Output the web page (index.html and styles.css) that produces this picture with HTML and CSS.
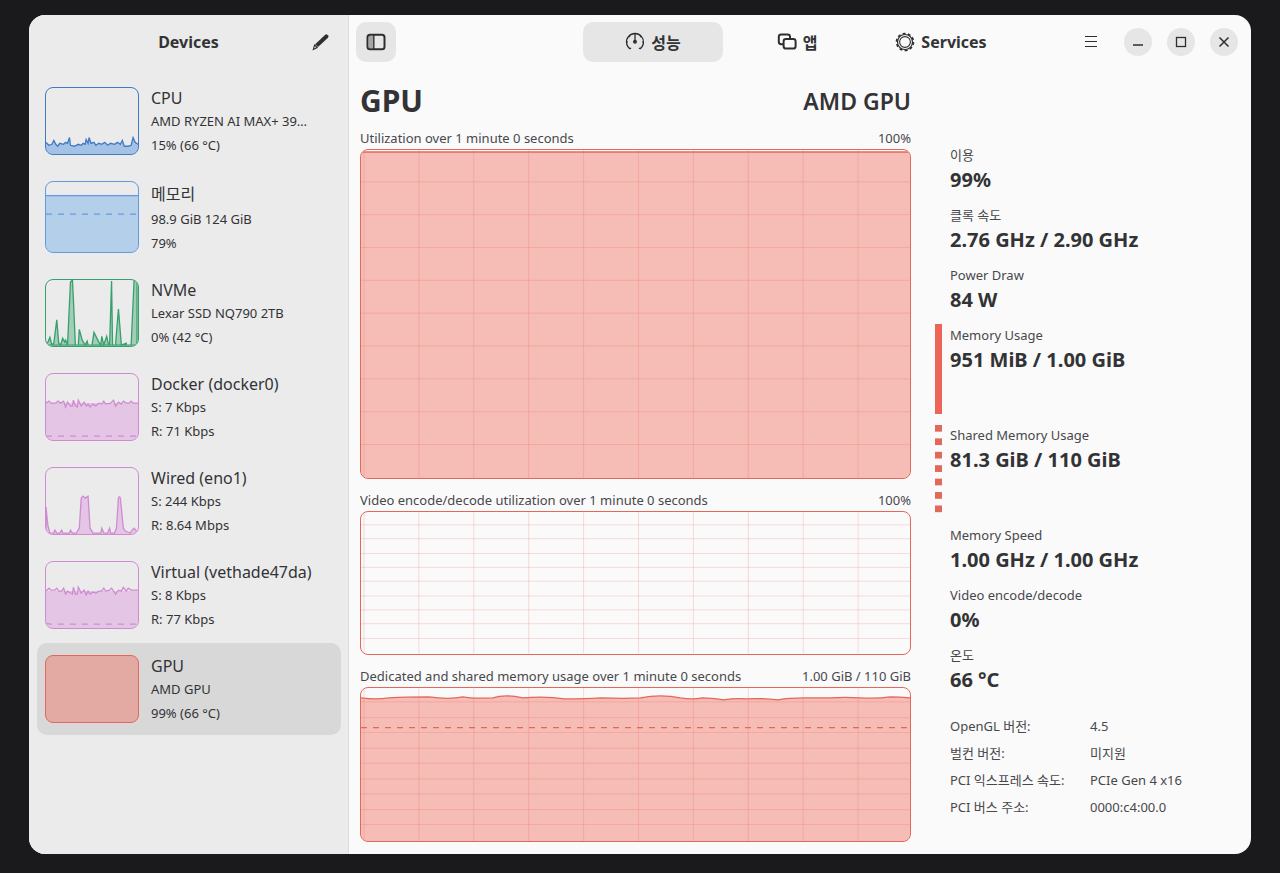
FILE: index.html
```html
<!DOCTYPE html>
<html lang="ko">
<head>
    <meta charset="UTF-8">
    <meta name="viewport" content="width=device-width, initial-scale=1.0">
    <title>GPU</title>
    <link rel="stylesheet" href="styles.css">
</head>
<body>
    <div class="window">

        <!-- Device list -->
        <aside class="sidebar">
            <header class="sidebar-header">
                <h2>Devices</h2>
                <button class="icon-button" aria-label="Edit">
                    <svg width="18" height="18" viewBox="0 0 18 18"><path d="M13.2 1.8 Q14.4.8 15.6 1.9 L16.2 2.6 Q17 3.7 16 4.7 L6 14 L3.2 11.2Z" fill="#2e2e30"/><path d="M2.6 12 L5.2 14.6 L1.3 16.4Z" fill="none" stroke="#2e2e30" stroke-width="1.1"/></svg>
                </button>
            </header>
            <nav class="device-list">
                <button class="device">
                    <span class="thumb cpu"><svg viewBox="0 0 94 68" preserveAspectRatio="none">
                        <path class="area" d="M0 56 L3 59 L6 58 L8 54 L10 58 L12 60 L14 57 L18 58 L20 56 L22 57 L24 51 L25 59 L29 60 L33 58 L36 59 L38 57 L40 58 L41 53 L43 57 L44 51 L46 57 L49 56 L51 59 L54 57 L57 58 L60 56 L63 59 L66 57 L70 58 L73 56 L76 58 L78 54 L80 60 L84 60 L87 59 L89 51 L91 56 L94 58 V70 H0Z"/>
                        <path class="line" d="M0 56 L3 59 L6 58 L8 54 L10 58 L12 60 L14 57 L18 58 L20 56 L22 57 L24 51 L25 59 L29 60 L33 58 L36 59 L38 57 L40 58 L41 53 L43 57 L44 51 L46 57 L49 56 L51 59 L54 57 L57 58 L60 56 L63 59 L66 57 L70 58 L73 56 L76 58 L78 54 L80 60 L84 60 L87 59 L89 51 L91 56 L94 58"/>
                    </svg></span>
                    <span class="device-text"><strong>CPU</strong><span>AMD RYZEN AI MAX+ 39…</span><span>15% (66 °C)</span></span>
                </button>
                <button class="device tall">
                    <span class="thumb memory"><svg viewBox="0 0 94 72" preserveAspectRatio="none">
                        <path class="area" d="M0 14 H94 V74 H0Z"/>
                        <path class="line" d="M0 14 H94"/>
                        <path class="line dash" d="M0 33 H94"/>
                    </svg></span>
                    <span class="device-text"><strong>메모리</strong><span>98.9 GiB 124 GiB</span><span>79%</span></span>
                </button>
                <button class="device">
                    <span class="thumb disk"><svg viewBox="0 0 94 68" preserveAspectRatio="none">
                        <path class="area line" d="M0 67 L2 64 L4 59 L6 67 L8 65 L11 41 L13 65 L15 67 L17 60 L19 64 L20 62 L22 67 L25 2 L27 0 L28 20 L30 67 H33 L34 51 L37 62 L40 67 L42 63 L43 67 H47 L49 54 L54 64 L56 67 L57 58 L59 67 L62 58 L64 67 H65 L67 1 L68 67 H71 L74 30 L77 67 L82 65 V67 H87 L90 0 H93 V67Z"/>
                    </svg></span>
                    <span class="device-text"><strong>NVMe</strong><span>Lexar SSD NQ790 2TB</span><span>0% (42 °C)</span></span>
                </button>
                <button class="device">
                    <span class="thumb net"><svg viewBox="0 0 94 68" preserveAspectRatio="none">
                        <path class="area" d="M0 30 H94 V70 H0Z"/>
                        <path class="line" d="M0 30 L3 28 L5 30 H10 L12 28 L15 30 L18 28 L20 34 L22 29 L25 33 L27 33 L28 27 L30 33 L32 34 L33 27 L36 33 L39 29 L41 33 L43 31 L45 34 L48 31 L51 33 L54 30 L57 31 L59 28 L61 31 L66 30 L69 27 L71 33 L74 29 L77 31 L79 28 L82 30 H85 L87 28 L89 30 H94"/>
                        <path class="line dash" d="M0 64 H94"/>
                    </svg></span>
                    <span class="device-text"><strong>Docker (docker0)</strong><span>S: 7 Kbps</span><span>R: 71 Kbps</span></span>
                </button>
                <button class="device">
                    <span class="thumb net"><svg viewBox="0 0 94 68" preserveAspectRatio="none">
                        <path class="area line" d="M0 40 L2 60 L4 67 H8 L9 64 L11 67 H14 L16 64 L17 67 H24 L25 64 L27 67 H31 L34 62 L36 31 L38 29 L40 31 L43 29 L45 62 L48 67 H56 L57 62 L59 67 H63 L65 62 L66 67 H70 L72 62 L74 31 Q75 28 76 31 L79 62 L81 65 L86 67 L88 64 L90 62 L94 67 V70 H0Z"/>
                    </svg></span>
                    <span class="device-text"><strong>Wired (eno1)</strong><span>S: 244 Kbps</span><span>R: 8.64 Mbps</span></span>
                </button>
                <button class="device">
                    <span class="thumb net"><svg viewBox="0 0 94 68" preserveAspectRatio="none">
                        <path class="area" d="M0 30 H94 V70 H0Z"/>
                        <path class="line" d="M0 30 L3 27 L5 29 H9 L11 27 L13 30 H16 L18 27 L20 33 L22 30 L25 32 L27 33 L28 26 L30 33 L32 33 L33 26 L36 32 L39 29 L41 34 L43 30 L45 33 L48 31 L51 32 L54 30 L57 30 L59 27 L61 30 L65 29 L67 27 L71 33 L74 29 L77 30 L79 26 L82 30 L84 27 L87 29 H94"/>
                        <path class="line dash" d="M0 63 L4 64 H94"/>
                    </svg></span>
                    <span class="device-text"><strong>Virtual (vethade47da)</strong><span>S: 8 Kbps</span><span>R: 77 Kbps</span></span>
                </button>
                <button class="device selected">
                    <span class="thumb gpu"></span>
                    <span class="device-text"><strong>GPU</strong><span>AMD GPU</span><span>99% (66 °C)</span></span>
                </button>
            </nav>
        </aside>

        <main class="main">
            <header class="header-bar">
                <button class="toggle" aria-label="Toggle sidebar">
                    <svg width="20" height="18" viewBox="0 0 20 18"><path d="M3 3 H7 V15 H3Z" fill="#a5a5a6"/><rect x="1.5" y="1.8" width="17" height="14.4" rx="2.5" fill="none" stroke="#2e2e30" stroke-width="2"/><path d="M7.8 2 V16" stroke="#2e2e30" stroke-width="1.4"/></svg>
                </button>
                <div class="tabs">
                    <button class="tab active">
                        <svg width="20" height="20" viewBox="0 0 20 20" fill="none" stroke="#2e2e30" stroke-width="1.3"><path d="M5.2 17 A8.5 8.5 0 1 1 14.8 17"/><path d="M10 1.5 V9"/><path d="M1.6 10 H3 M17 10 H18.4 M4 4 L5 5 M16 4 L15 5 M5.2 17 L6 15.8 M14.8 17 L14 15.8" stroke-width="1.1"/><circle cx="10" cy="9.8" r="1.3" fill="#2e2e30"/></svg>
                        성능
                    </button>
                    <button class="tab">
                        <svg width="20" height="20" viewBox="0 0 20 20" fill="none" stroke="#2e2e30" stroke-width="2"><path d="M6.4 12.2 H4.2 Q1.8 12.2 1.8 9.8 V4.8 Q1.8 2.4 4.2 2.4 H10.6 Q13 2.4 13 4.8 V6.6"/><rect x="6.6" y="7" width="12" height="9.6" rx="2.4"/></svg>
                        앱
                    </button>
                    <button class="tab">
                        <svg width="20" height="20" viewBox="0 0 20 20" fill="none" stroke="#2e2e30"><circle cx="10" cy="10" r="8.5" stroke-width="1.6" stroke-dasharray="3 2.34"/><circle cx="10" cy="10" r="7.5" stroke-width="1.2"/><circle cx="10" cy="10" r="5.4" stroke-width="1.1"/></svg>
                        Services
                    </button>
                </div>
                <div class="window-controls">
                    <button class="icon-button menu" aria-label="Menu">
                        <svg width="14" height="14" viewBox="0 0 14 14"><path d="M1 1.5 H13 M1 6.5 H13 M1 11.5 H13" stroke="#2e2e30" stroke-width="1.2"/></svg>
                    </button>
                    <button class="round" aria-label="Minimize">
                        <svg width="12" height="12" viewBox="0 0 12 12"><path d="M1 9 H11" stroke="#2e2e30" stroke-width="1.4"/></svg>
                    </button>
                    <button class="round" aria-label="Maximize">
                        <svg width="12" height="12" viewBox="0 0 12 12"><rect x="1.5" y="1.5" width="9" height="9" fill="none" stroke="#2e2e30" stroke-width="1.3"/></svg>
                    </button>
                    <button class="round" aria-label="Close">
                        <svg width="12" height="12" viewBox="0 0 12 12"><path d="M1.5 1.5 L10.5 10.5 M10.5 1.5 L1.5 10.5" stroke="#2e2e30" stroke-width="1.5"/></svg>
                    </button>
                </div>
            </header>

            <div class="content">
                <!-- Graphs -->
                <section class="charts">
                    <div class="title-row">
                        <h1>GPU</h1>
                        <h2>AMD GPU</h2>
                    </div>

                    <div class="caption"><span>Utilization over 1 minute 0 seconds</span><span>100%</span></div>
                    <div class="chart chart-large">
                        <svg viewBox="0 0 550 330" preserveAspectRatio="none">
                            <path class="area" d="M0 2 H550 V330 H0Z"/>
                            <path class="grid" d="M3 0V330 M58 0V330 M113 0V330 M168 0V330 M223 0V330 M278 0V330 M333 0V330 M388 0V330 M443 0V330 M498 0V330 M0 32H550 M0 65H550 M0 98H550 M0 131H550 M0 164H550 M0 197H550 M0 230H550 M0 263H550 M0 296H550"/>
                            <path class="line" d="M0 2 H550"/>
                        </svg>
                    </div>

                    <div class="caption"><span>Video encode/decode utilization over 1 minute 0 seconds</span><span>100%</span></div>
                    <div class="chart chart-small">
                        <svg viewBox="0 0 550 143" preserveAspectRatio="none">
                            <path class="grid" d="M3 0V143 M58 0V143 M113 0V143 M168 0V143 M223 0V143 M278 0V143 M333 0V143 M388 0V143 M443 0V143 M498 0V143 M0 13H550 M0 27H550 M0 42H550 M0 56H550 M0 70H550 M0 85H550 M0 99H550 M0 113H550 M0 128H550"/>
                        </svg>
                    </div>

                    <div class="caption"><span>Dedicated and shared memory usage over 1 minute 0 seconds</span><span>1.00 GiB / 110 GiB</span></div>
                    <div class="chart chart-medium">
                        <svg viewBox="0 0 550 155" preserveAspectRatio="none">
                            <path class="area" d="M0 10 Q15 12 28 10 Q45 9 68 9 Q88 12 102 9 Q112 11 132 10 Q145 6 162 10 Q185 8 204 11 Q225 11 240 10 Q265 11 280 10 Q300 6 320 10 Q332 12 342 10 Q350 10 363 12 Q375 10 386 11 Q400 10 418 12 Q428 10 445 10 L470 10 Q485 9 500 10 Q518 11 530 9 Q540 9 550 10 V155 H0Z"/>
                            <path class="grid" d="M3 0V155 M58 0V155 M113 0V155 M168 0V155 M223 0V155 M278 0V155 M333 0V155 M388 0V155 M443 0V155 M498 0V155 M0 14H550 M0 30H550 M0 45H550 M0 61H550 M0 76H550 M0 92H550 M0 107H550 M0 123H550 M0 138H550"/>
                            <path class="line" d="M0 10 Q15 12 28 10 Q45 9 68 9 Q88 12 102 9 Q112 11 132 10 Q145 6 162 10 Q185 8 204 11 Q225 11 240 10 Q265 11 280 10 Q300 6 320 10 Q332 12 342 10 Q350 10 363 12 Q375 10 386 11 Q400 10 418 12 Q428 10 445 10 L470 10 Q485 9 500 10 Q518 11 530 9 Q540 9 550 10"/>
                            <path class="line dash" d="M0 40 H550"/>
                        </svg>
                    </div>
                </section>

                <!-- Readings -->
                <section class="details">
                    <dl class="stats">
                        <div class="stat"><dt>이용</dt><dd>99%</dd></div>
                        <div class="stat"><dt>클록 속도</dt><dd>2.76 GHz / 2.90 GHz</dd></div>
                        <div class="stat"><dt>Power Draw</dt><dd>84 W</dd></div>
                        <div class="stat bar"><dt>Memory Usage</dt><dd>951 MiB / 1.00 GiB</dd></div>
                        <div class="stat bar dotted"><dt>Shared Memory Usage</dt><dd>81.3 GiB / 110 GiB</dd></div>
                        <div class="stat"><dt>Memory Speed</dt><dd>1.00 GHz / 1.00 GHz</dd></div>
                        <div class="stat"><dt>Video encode/decode</dt><dd>0%</dd></div>
                        <div class="stat"><dt>온도</dt><dd>66 °C</dd></div>
                    </dl>
                    <table class="info">
                        <tr><th scope="row">OpenGL 버전:</th><td>4.5</td></tr>
                        <tr><th scope="row">벌컨 버전:</th><td>미지원</td></tr>
                        <tr><th scope="row">PCI 익스프레스 속도:</th><td>PCIe Gen 4 x16</td></tr>
                        <tr><th scope="row">PCI 버스 주소:</th><td>0000:c4:00.0</td></tr>
                    </table>
                </section>
            </div>
        </main>
    </div>
</body>
</html>
```
FILE: styles.css
```css
* {
    box-sizing: border-box;
}

body {
    margin: 0;
    min-height: 100vh;
    padding: 15px 29px 19px;
    display: flex;
    background-color: #1a1a1c;
    color: #333335;
    font-family: "Noto Sans", "Noto Sans CJK KR", sans-serif;
    font-size: 13px;
}

h1, h2, dl, dd {
    margin: 0;
}

button {
    border: none;
    padding: 0;
    background: none;
    color: inherit;
    font: inherit;
    cursor: pointer;
}

svg {
    display: block;
    flex-shrink: 0;
}

.window {
    flex: 1;
    display: flex;
    min-width: 0;
    background-color: #fafafb;
    border-radius: 16px;
    overflow: hidden;
}

/* Sidebar */
.sidebar {
    width: 320px;
    flex-shrink: 0;
    background-color: #ebebec;
    border-right: 1px solid #dcdcdd;
}

.sidebar-header {
    height: 54px;
    padding: 0 13px;
    display: grid;
    grid-template-columns: 28px 1fr 28px;
    align-items: center;
}

.sidebar-header h2 {
    grid-column: 2;
    font-size: 16px;
    text-align: center;
}

.icon-button {
    width: 28px;
    height: 28px;
    display: flex;
    align-items: center;
    justify-content: center;
}

.device-list {
    padding: 6px 7px 6px 8px;
    display: flex;
    flex-direction: column;
    gap: 2px;
}

.device {
    display: flex;
    gap: 12px;
    padding: 12px 8px 10px;
    border-radius: 10px;
    text-align: left;
}

.device.selected {
    background-color: #d8d8d9;
}

.thumb {
    width: 94px;
    height: 68px;
    flex-shrink: 0;
    border: 1px solid;
    border-radius: 8px;
    overflow: hidden;
}

.device.tall .thumb {
    height: 72px;
}

.thumb svg,
.chart svg {
    width: 100%;
    height: 100%;
}

.cpu {
    color: #3f7ac4;
}

.memory {
    color: #6699dc;
}

.disk {
    color: #36a06c;
}

.net {
    color: #cf8bd2;
}

.gpu {
    color: #e2685a;
    background-color: #e3aaa4;
}

.area {
    fill: currentColor;
    fill-opacity: 0.4;
}

.cpu .area {
    fill: #3a85dc;
}

.memory .area {
    fill: #62a5e7;
}

.net .area {
    fill: #dc8cde;
}

.line {
    stroke: currentColor;
    stroke-width: 1.3;
    vector-effect: non-scaling-stroke;
}

.line:not(.area) {
    fill: none;
}

.line.dash {
    stroke-dasharray: 6 6;
}

.device-text {
    min-width: 0;
    display: flex;
    flex-direction: column;
    line-height: 24px;
    white-space: nowrap;
}

.device-text strong {
    font-size: 16px;
    font-weight: 400;
    line-height: 22px;
}

.tall strong {
    line-height: 26px;
}

/* Header bar */
.main {
    flex: 1;
    min-width: 0;
    display: flex;
    flex-direction: column;
}

.header-bar {
    height: 54px;
    padding: 0 13px 0 7px;
    display: grid;
    grid-template-columns: 1fr auto 1fr;
    align-items: center;
}

.toggle {
    width: 40px;
    height: 40px;
    border-radius: 10px;
    background-color: #e6e6e7;
    display: flex;
    align-items: center;
    justify-content: center;
}

.tabs {
    display: flex;
    gap: 4px;
}

.tab {
    min-width: 140px;
    height: 40px;
    border-radius: 10px;
    display: flex;
    align-items: center;
    justify-content: center;
    gap: 6px;
    font-size: 16px;
    font-weight: 700;
}

.tab.active {
    background-color: #e6e6e7;
}

.window-controls {
    display: flex;
    align-items: center;
    justify-content: flex-end;
    gap: 15px;
}

.menu {
    margin-right: 4px;
}

.round {
    width: 28px;
    height: 28px;
    border-radius: 50%;
    background-color: #e6e6e7;
    display: flex;
    align-items: center;
    justify-content: center;
}

/* Content */
.content {
    flex: 1;
    padding-left: 11px;
    display: grid;
    grid-template-columns: 1fr 316px;
    gap: 24px;
}

.charts {
    padding: 12px 0;
    min-width: 0;
    display: flex;
    flex-direction: column;
}

.title-row {
    display: flex;
    justify-content: space-between;
    align-items: center;
    margin-bottom: 6px;
    line-height: 40px;
}

.title-row h1 {
    font-size: 30px;
}

.title-row h2 {
    font-size: 23px;
    font-weight: 600;
}

.caption {
    display: flex;
    justify-content: space-between;
    color: #48484a;
    line-height: 22px;
    white-space: nowrap;
}

.chart {
    color: #e2685a;
    border: 1px solid;
    border-radius: 8px;
    overflow: hidden;
    min-height: 0;
}

.chart + .caption {
    margin-top: 10px;
}

.chart-large {
    flex: 332 1 0;
}

.chart-small {
    flex: 143 1 0;
}

.chart-medium {
    flex: 155 1 0;
}

.chart .area {
    fill: #f16051;
}

.grid {
    fill: none;
    stroke: #ed5b4b;
    stroke-opacity: 0.2;
    vector-effect: non-scaling-stroke;
}

/* Readings */
.details {
    padding: 75px 12px 12px 15px;
}

.stats {
    display: flex;
    flex-direction: column;
    gap: 10px;
}

.stat dt {
    color: #48484a;
    line-height: 22px;
}

.stat dd {
    font-size: 20px;
    font-weight: 700;
    line-height: 28px;
}

.stat.bar {
    height: 90px;
    margin-left: -15px;
    padding-left: 15px;
    background: linear-gradient(#ed6556, #ed6556) no-repeat left / 7px 100%;
}

/* seven squares down the side */
.stat.bar.dotted {
    background: linear-gradient(transparent 1px, #e2685a 1px 8px, transparent 8px) repeat-y left top / 7px calc(94px / 7);
}

.info {
    margin-top: 18px;
    border-collapse: collapse;
    color: #48484a;
}

.info th,
.info td {
    height: 27px;
    padding: 0;
    font-weight: 400;
    line-height: 20px;
    text-align: left;
    white-space: nowrap;
}

.info th {
    width: 140px;
}
```
